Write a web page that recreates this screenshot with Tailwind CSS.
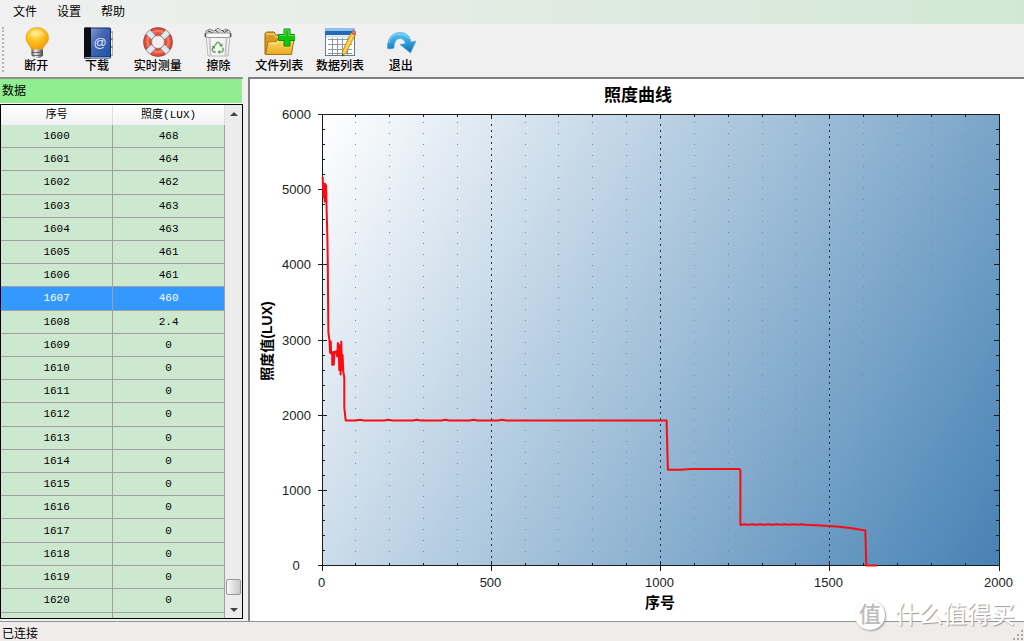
<!DOCTYPE html>
<html lang="zh-CN">
<head>
<meta charset="utf-8">
<meta name="viewport" content="width=device-width, initial-scale=1">
<title>照度曲线</title>
<script src="https://cdn.jsdelivr.net/npm/@tailwindcss/browser@4"></script>
</head>
<body class="relative flex h-screen flex-col overflow-hidden bg-[#f0f0f0] font-['Liberation_Sans','Noto_Sans_CJK_SC',sans-serif] text-xs text-black">

<nav class="flex h-6 shrink-0 items-center gap-5 bg-linear-to-r from-[#f0f0f0] via-[#e1ece3] to-[#d2e8d4] pl-[13px]">
  <button type="button" class="leading-6">文件</button>
  <button type="button" class="leading-6">设置</button>
  <button type="button" class="leading-6">帮助</button>
</nav>

<div class="flex h-[53px] shrink-0 items-start bg-[#f0f0f0] pt-[3px] pl-[2px]" role="toolbar">
  <div class="h-[45px] w-1 border-l-2 border-dotted border-[#a9bba9]"></div>
  <div class="grid w-[425px] grid-cols-7 leading-[14px] font-medium whitespace-nowrap">
    <button type="button" class="flex flex-col items-center">
      <svg class="size-8" viewBox="0 0 32 32">
        <defs><radialGradient id="bulb" cx=".4" cy=".3" r=".7"><stop offset="0" stop-color="#ffe566"/><stop offset=".5" stop-color="#ffc21d"/><stop offset="1" stop-color="#f49a0c"/></radialGradient>
        <linearGradient id="cap"><stop offset="0" stop-color="#555"/><stop offset=".35" stop-color="#eee"/><stop offset="1" stop-color="#444"/></linearGradient></defs>
        <path d="M17 0.500C10.500 .5 6 5 6 11c0 5.500 4 6.500 5.500 11.500h11C24 17.500 28.500 16.500 28.500 11 28.500 5 23.500 .5 17 .5z" fill="url(#bulb)" stroke="#e8940f" stroke-width=".6"/>
        <path d="M9.500 8c1-3 4-5 8-5s6 2 7 5c-4 2-11 2-15 0z" fill="#fff" opacity=".3"/>
        <path d="M11.500 22.500h11.500v6l-3 2.500h-5.500l-3-2.500z" fill="url(#cap)"/>
        <path d="M11.500 25.500h11.500M12 28.500h10.500" stroke="#555" stroke-width=".8"/>
      </svg>断开</button>
    <button type="button" class="flex flex-col items-center">
      <svg class="size-8" viewBox="0 0 32 32">
        <defs><linearGradient id="book" x2="1" y2="1"><stop offset="0" stop-color="#8297cd"/><stop offset=".4" stop-color="#4565b3"/><stop offset="1" stop-color="#1a55a8"/></linearGradient></defs>
        <path d="M29 5h3v6l-2 1 2 1v6l-2 1 2 1v7h-3z" fill="#f2f2f2" stroke="#777"/>
        <rect x="3" y=".5" width="27" height="31" rx="1.500" fill="#142d63"/>
        <rect x="3" y=".5" width="7" height="31" rx="1" fill="#0b0d14"/>
        <rect x="10" y="1.500" width="19" height="28" fill="url(#book)"/>
        <path d="M4 30.500h25" stroke="#8ea1c4"/>
        <text x="19" y="20" text-anchor="middle" font-size="13" fill="#dfe8fa">@</text>
      </svg>下载</button>
    <button type="button" class="flex flex-col items-center">
      <svg class="size-8" viewBox="0 0 32 32">
        <circle cx="16" cy="15" r="14.500" fill="none" stroke="#8794a0" stroke-width="1"/>
        <circle cx="16" cy="15" r="10.500" fill="none" stroke="#b52d1b" stroke-width="8"/>
        <circle cx="16" cy="15" r="10.500" fill="none" stroke="#e4533b" stroke-width="6.500"/>
        <circle cx="16" cy="14.500" r="10.500" fill="none" stroke="#f07f69" stroke-width="2"/>
        <g stroke="#dfebf4" stroke-width="5"><path d="M6 5l5.500 5.500M26 5l-5.500 5.500M6 25l5.500-5.500M26 25l-5.500-5.500"/></g>
        <g stroke="#7fb2d6" stroke-width=".8"><path d="M4 7l5.500 5.500M8 3l5.500 5.500M28 7l-5.500 5.500M24 3l-5.500 5.500M4 23l5.500-5.500M8 27l5.500-5.500M28 23l-5.500-5.500M24 27l-5.500-5.500"/></g>
        <circle cx="16" cy="15" r="6.500" fill="#f0f0f0" stroke="#8b5148" stroke-width=".7"/>
      </svg>实时测量</button>
    <button type="button" class="flex flex-col items-center">
      <svg class="size-8" viewBox="0 0 32 32">
        <path d="M4 9l2 20h20l2-20z" fill="#f3f4f3" stroke="#b7b9b7"/>
        <path d="M7.500 11l1 18M24.500 11l-1 18" stroke="#c9c9c9" stroke-width="2"/>
        <path d="M4 4l4-2 4 2 4-3 4 3 4-2 4 2v3H4z" fill="#d6d6d6" stroke="#888"/>
        <path d="M6 4l5 2M13 3l4 3M20 3l3 3M26 3l-3 2" stroke="#444"/>
        <rect x="3" y="6" width="26" height="4.500" rx="1.500" fill="#f8f8f8" stroke="#999"/>
        <path d="M3.500 6v4M28.500 6v4" stroke="#555" stroke-width="1.500"/>
        <g fill="none" stroke="#71ad6d" stroke-width="1.500"><path d="M13 18.500l2-3h2l2 3M20.500 20.500l1 2-1.500 2.500h-3M11.500 20l-1.500 2.500 1.500 2.500h2.500"/></g>
        <path d="M20.500 16v3.500H17zM18 23v4l-2.500-2zM9.500 19.500l3.500-1v3.500z" fill="#57985a"/>
      </svg>擦除</button>
    <button type="button" class="flex flex-col items-center">
      <svg class="size-8" viewBox="0 0 32 32">
        <defs><linearGradient id="fold" x2="0" y2="1"><stop offset="0" stop-color="#ffdf6b"/><stop offset="1" stop-color="#e8a820"/></linearGradient></defs>
        <path d="M2 27V6.500L3.500 5H11l2 3h14v19z" fill="#d99b1f" stroke="#9c6a0d"/>
        <path d="M3 7h8l2 3h13" fill="none" stroke="#ffe9a0"/>
        <path d="M2.500 27.500L5 15h8l2-3h16l-2.500 15.500z" fill="url(#fold)" stroke="#a87210"/>
        <path d="M6 16h8l2-3h13.500" fill="none" stroke="#fff0b0"/>
        <path d="M21 2h6v5.500h5.500v6H27V19h-6v-5.500h-5.500v-6H21z" fill="#14c40f" stroke="#0b8f12"/>
        <path d="M22 3h4v5.500h5.500M22 3v5.500h-5.500" fill="none" stroke="#73e568" stroke-width=".8"/>
      </svg>文件列表</button>
    <button type="button" class="flex flex-col items-center">
      <svg class="size-8" viewBox="0 0 32 32">
        <rect x="1.500" y="1.500" width="29" height="27" fill="#fff" stroke="#637a91"/>
        <rect x="1" y="1" width="30" height="3" fill="#8fc3ed"/><rect x="1" y="4" width="30" height="4" fill="#2369b4"/>
        <path d="M2 9.500h28" stroke="#d3dfe9" stroke-width="2"/>
        <path d="M4 12.500h24M4 17.500h24M4 22.500h24M4 26.500h24M8.500 11v17M13.500 11v17M18.500 11v17M23.500 11v17" stroke="#8a98a9"/>
        <path d="M27 6l4 2-9 18-4 3 .5-5z" fill="#fbc62b" stroke="#b57d11" stroke-width=".8"/>
        <path d="M29 8l-9 18" stroke="#ffe888"/>
        <path d="M28 4l1-1 3 2-.5 3-4-2z" fill="#e27a7d" stroke="#a24b50" stroke-width=".7"/>
        <path d="M18.300 27l-.3 2.500 2-1.500z" fill="#333"/>
      </svg>数据列表</button>
    <button type="button" class="flex flex-col items-center">
      <svg class="size-8" viewBox="0 0 32 32">
        <defs><linearGradient id="arr" x2="0" y2="1"><stop offset="0" stop-color="#59cbf7"/><stop offset="1" stop-color="#096bb9"/></linearGradient></defs>
        <path d="M2.500 21.500C2 12 7 5.500 15 5.500c6 0 10 3.500 11 9.500l5-1-5.500 12L15 17.500l5.500-1C19.500 13 17.500 11.500 15 11.500c-4 0-6 4-6 9.500-2 1-4.500 1-6.500.5z" fill="url(#arr)" stroke="#4aa3d4" stroke-width=".6"/>
        <path d="M4 16C5 10 9 7 15 7c4 0 7 2 9 5" fill="none" stroke="#a8e6fc" opacity=".7"/>
      </svg>退出</button>
  </div>
</div>

<main class="flex min-h-0 flex-1">
  <aside class="flex w-[243px] shrink-0 flex-col border-t-2 border-[#8d938d]">
    <h2 class="h-[25px] shrink-0 border-r border-b border-white bg-[#90ee90] pl-[2px] leading-6">数据</h2>
    <div class="mb-[2px] flex min-h-0 flex-1 overflow-hidden border border-black bg-[#f0f0f0]">
      <div class="min-w-0 flex-1">
      <table class="h-full w-full table-fixed border-collapse text-center font-['Liberation_Mono','Noto_Sans_CJK_SC',monospace] text-[11px] leading-5">
        <thead>
          <tr class="h-5 bg-linear-to-b from-white to-[#f1f2f4]">
            <th scope="col" class="h-5 border-r border-[#dcdee0] p-0 font-normal">序号</th>
            <th scope="col" class="h-5 border-r border-[#dcdee0] p-0 font-normal">照度(LUX)</th>
          </tr>
        </thead>
        <tbody id="rows"></tbody>
      </table>
      </div>
      <div class="flex w-[17px] shrink-0 flex-col items-center bg-[#ececec]">
        <div class="mt-[7px] border-x-4 border-b-4 border-x-transparent border-b-[#444]"></div>
        <div class="mt-auto h-4 w-[15px] rounded-xs border border-[#989898] bg-linear-to-r from-[#f8f8f8] to-[#c8c8c8]"></div>
        <div class="mt-[13px] mb-[6px] border-x-4 border-t-4 border-x-transparent border-t-[#444]"></div>
      </div>
    </div>
  </aside>

  <section class="ml-[5px] min-w-0 flex-1 border-t-2 border-l-2 border-[#7f7f7f] bg-white">
    <svg class="block size-full font-['Liberation_Sans','Noto_Sans_CJK_SC',sans-serif]" viewBox="250 79 774 542" role="img" aria-label="照度曲线">
      <defs>
        <linearGradient id="plot" gradientUnits="userSpaceOnUse" x1="322" y1="114" x2="1023" y2="523">
          <stop offset="0" stop-color="#ffffff"/><stop offset="1" stop-color="#4682b4"/>
        </linearGradient>
      </defs>
      <rect x="322" y="115" width="677" height="451" fill="url(#plot)"/>
      <g id="grid" shape-rendering="crispEdges"></g>
      <rect x="322" y="114.500" width="677" height="451" fill="none" stroke="#1c1c1c" shape-rendering="crispEdges"/>
      <polyline id="curve" fill="none" stroke="#f80d12" stroke-width="2" stroke-linejoin="round"/>
      <g id="labels" font-size="13" fill="#222"></g>
      <g font-weight="700" text-anchor="middle">
        <text x="638" y="101" font-size="17">照度曲线</text>
        <text x="660" y="608" font-size="15">序号</text>
        <text transform="translate(272 341) rotate(-90)" font-size="14">照度值(LUX)</text>
      </g>
    </svg>
  </section>
</main>

<footer class="flex h-5 shrink-0 items-center justify-between border-t border-[#8f9591] bg-[#f0eceb] pl-[2px]">
  <span class="pt-1">已连接</span>
  <svg class="size-3 self-end" viewBox="0 0 12 12" fill="#a9a9a9"><path d="M9 1h2v2H9zM5 5h2v2H5zM9 5h2v2H9zM1 9h2v2H1zM5 9h2v2H5zM9 9h2v2H9z"/></svg>
</footer>

<div class="absolute right-[9px] bottom-[10px] flex items-center gap-[10px] text-[24px] leading-8 text-white [text-shadow:1px_1px_1px_#999]">
  <span class="flex size-[30px] items-center justify-center rounded-full bg-white text-[22px] leading-none font-medium text-[#bcbcbc] shadow-[1px_1px_2px_#999] [text-shadow:none]">值</span>
  <span>什么值得买</span>
</div>

<script>
const lux = [468, 464, 462, 463, 463, 461, 461, 460, 2.4];
const selected = 1607;
let html = '';
for (let i = 0; i < 21; i++) {
  const n = 1600 + i;
  const tone = n === selected ? 'bg-[#3399ff] text-white' : 'bg-[#cce8cf]';
  html += `<tr class="${tone}"><td class="border-r border-b border-[#a0a0a0] p-0">${n}</td><td class="border-r border-b border-[#a0a0a0] p-0">${lux[i] ?? 0}</td></tr>`;
}
html += '<tr class="h-[6px] bg-[#cce8cf]"><td class="h-[6px] border-r border-[#a0a0a0] p-0"></td><td class="h-[6px] border-r border-[#a0a0a0] p-0"></td></tr>';
document.getElementById('rows').innerHTML = html;

const X = v => 322 + v * 677 / 2000;
const Y = v => 565.5 - v * 451 / 6000;
const line = (x1, y1, x2, y2, extra = '') => `<line x1="${x1}" y1="${y1}" x2="${x2}" y2="${y2}" ${extra || 'stroke="#1c1c1c"'}/>`;
let grid = '', labels = '';
for (let v = 0; v <= 2000; v += 100) {
  const x = Math.floor(X(v)) + 0.5, major = v % 500 === 0;
  if (v > 0 && v < 2000) {
    grid += major
      ? line(x, 124, x, 562, 'stroke="#26323c" stroke-dasharray="2 4"')
      : line(x, 122, x, 562, 'stroke="#7d8992" stroke-dasharray="1 10"');
  }
  grid += line(x, 114, x, major ? 119 : 117) + line(x, major ? 561 : 563, x, major ? 571 : 566);
  if (major) labels += `<text x="${x - 1}" y="587" text-anchor="middle">${v}</text>`;
}
for (let v = 0; v <= 6000; v += 200) {
  const y = Math.floor(Y(v)) + 0.5, major = v % 1000 === 0;
  grid += line(major ? 318 : 322, y, major ? 327 : 325, y) + line(major ? 994 : 996, y, 999, y);
  if (major) labels += v ? `<text x="311" y="${y + 4}" text-anchor="end">${v}</text>` : `<text x="296" y="${y + 4}" text-anchor="middle">0</text>`;
}
document.getElementById('grid').innerHTML = grid;
document.getElementById('labels').innerHTML = labels;

const series = [[2,5170],[4,4900],[6,5080],[8,4840],[9,5080],[11,4850],[12,5060],[14,4700],[16,4350],[17,4000],[18,3500],[19,3100],[22,3000],[24,2830],[26,2980],[27,2820],[30,2830],[30,2670],[33,2840],[35,2670],[37,2840],[42,2850],[45,2780],[47,2960],[50,2800],[51,2600],[53,2930],[55,2540],[57,2980],[59,2600],[61,2800],[63,2580],[66,2500],[66,2100],[70,1930]];
for (let n = 76; n < 1010; n += 12) series.push([n, n < 600 && n % 7 === 0 ? 1940 : 1930]);
series.push([1018,1930],[1022,1275],[1060,1275],[1090,1283],[1233,1283],[1236,1265],[1236,540]);
for (let n = 1248; n < 1430; n += 12) series.push([n, n % 24 ? 542 : 548]);
series.push([1460,535],[1520,518],[1560,500],[1605,465],[1608,0],[1640,0]);
document.getElementById('curve').setAttribute('points', series.map(([n, v]) => `${X(n).toFixed(1)},${Y(v).toFixed(1)}`).join(' '));
</script>
</body>
</html>
